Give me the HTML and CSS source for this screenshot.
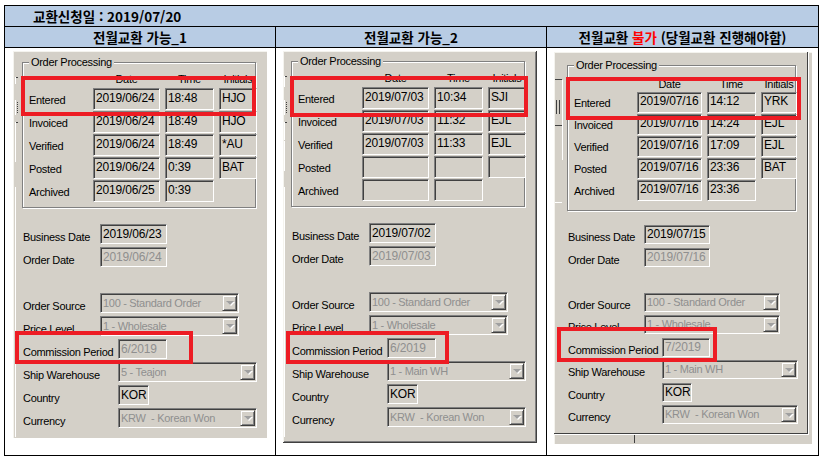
FILE: index.html
```html
<!DOCTYPE html>
<html lang="ko">
<head>
<meta charset="utf-8">
<title>전월교환</title>
<link rel="stylesheet" href="styles.css">
</head>
<body>
<table class="sheet">
  <colgroup><col class="c-a"><col class="c-b"><col class="c-c"></colgroup>
  <tr class="r-title"><td colspan="3" class="title">교환신청일 : 2019/07/20</td></tr>
  <tr class="r-head">
    <td class="head">전월교환 가능_1</td>
    <td class="head">전월교환 가능_2</td>
    <td class="head">전월교환 <span class="red">불가</span> (당월교환 진행해야함)</td>
  </tr>
  <tr class="r-body">
    <td class="cell cell1">
      <div class="win win1">
        <div class="group">
          <span class="legend">Order Processing</span>
          <div class="ghead"><span></span><span>Date</span><span>Time</span><span>Initials</span></div>
          <div class="gbody">
            <div class="grow"><span class="glbl">Entered</span><span class="fld">2019/06/24</span><span class="fld">18:48</span><span class="fld">HJO</span></div>
            <div class="grow"><span class="glbl">Invoiced</span><span class="fld">2019/06/24</span><span class="fld">18:49</span><span class="fld">HJO</span></div>
            <div class="grow"><span class="glbl">Verified</span><span class="fld">2019/06/24</span><span class="fld">18:49</span><span class="fld">*AU</span></div>
            <div class="grow"><span class="glbl">Posted</span><span class="fld">2019/06/24</span><span class="fld">0:39</span><span class="fld">BAT</span></div>
            <div class="grow"><span class="glbl">Archived</span><span class="fld">2019/06/25</span><span class="fld">0:39</span></div>
          </div>
        </div>
        <div class="form">
          <div class="frow"><span class="lbl">Business Date</span><span class="fld w-date">2019/06/23</span></div>
          <div class="frow"><span class="lbl">Order Date</span><span class="fld w-date dis">2019/06/24</span></div>
          <div class="frow"></div>
          <div class="frow"><span class="lbl">Order Source</span><span class="fld dd w-dd dis"><span class="t">100 - Standard Order</span><span class="b"></span></span></div>
          <div class="frow"><span class="lbl">Price Level</span><span class="fld dd w-dd dis"><span class="t">1 - Wholesale</span><span class="b"></span></span></div>
          <div class="frow"><span class="lbl l2">Commission Period</span><span class="fld w-cp dis">6/2019</span></div>
          <div class="frow"><span class="lbl l2">Ship Warehouse</span><span class="fld dd w-dd dis"><span class="t">5 - Teajon</span><span class="b"></span></span></div>
          <div class="frow"><span class="lbl l2">Country</span><span class="fld w-co">KOR</span></div>
          <div class="frow"><span class="lbl l2">Currency</span><span class="fld dd w-dd dis"><span class="t">KRW&nbsp; - Korean Won</span><span class="b"></span></span></div>
        </div>
        <div class="hl hl-e1"></div>
        <div class="hl hl-c1"></div>
      </div>
    </td>
    <td class="cell cell2">
      <div class="win win2">
        <div class="group">
          <span class="legend">Order Processing</span>
          <div class="ghead"><span></span><span>Date</span><span>Time</span><span>Initials</span></div>
          <div class="gbody">
            <div class="grow"><span class="glbl">Entered</span><span class="fld">2019/07/03</span><span class="fld">10:34</span><span class="fld">SJI</span></div>
            <div class="grow"><span class="glbl">Invoiced</span><span class="fld">2019/07/03</span><span class="fld">11:32</span><span class="fld">EJL</span></div>
            <div class="grow"><span class="glbl">Verified</span><span class="fld">2019/07/03</span><span class="fld">11:33</span><span class="fld">EJL</span></div>
            <div class="grow"><span class="glbl">Posted</span><span class="fld"></span><span class="fld"></span><span class="fld"></span></div>
            <div class="grow"><span class="glbl">Archived</span><span class="fld"></span><span class="fld"></span></div>
          </div>
        </div>
        <div class="form">
          <div class="frow"><span class="lbl">Business Date</span><span class="fld w-date">2019/07/02</span></div>
          <div class="frow"><span class="lbl">Order Date</span><span class="fld w-date dis">2019/07/03</span></div>
          <div class="frow"></div>
          <div class="frow"><span class="lbl">Order Source</span><span class="fld dd w-dd dis"><span class="t">100 - Standard Order</span><span class="b"></span></span></div>
          <div class="frow"><span class="lbl">Price Level</span><span class="fld dd w-dd dis"><span class="t">1 - Wholesale</span><span class="b"></span></span></div>
          <div class="frow"><span class="lbl l2">Commission Period</span><span class="fld w-cp dis">6/2019</span></div>
          <div class="frow"><span class="lbl l2">Ship Warehouse</span><span class="fld dd w-dd dis"><span class="t">1 - Main WH</span><span class="b"></span></span></div>
          <div class="frow"><span class="lbl l2">Country</span><span class="fld w-co">KOR</span></div>
          <div class="frow"><span class="lbl l2">Currency</span><span class="fld dd w-dd dis"><span class="t">KRW&nbsp; - Korean Won</span><span class="b"></span></span></div>
        </div>
        <div class="hl hl-e2"></div>
        <div class="hl hl-c2"></div>
      </div>
    </td>
    <td class="cell cell3">
      <div class="win win3">
        <div class="frame">
          <div class="group">
            <span class="legend">Order Processing</span>
            <div class="ghead"><span></span><span>Date</span><span>Time</span><span>Initials</span></div>
            <div class="gbody">
              <div class="grow"><span class="glbl">Entered</span><span class="fld">2019/07/16</span><span class="fld">14:12</span><span class="fld">YRK</span></div>
              <div class="grow"><span class="glbl">Invoiced</span><span class="fld">2019/07/16</span><span class="fld">14:24</span><span class="fld">EJL</span></div>
              <div class="grow"><span class="glbl">Verified</span><span class="fld">2019/07/16</span><span class="fld">17:09</span><span class="fld">EJL</span></div>
              <div class="grow"><span class="glbl">Posted</span><span class="fld">2019/07/16</span><span class="fld">23:36</span><span class="fld">BAT</span></div>
              <div class="grow"><span class="glbl">Archived</span><span class="fld">2019/07/16</span><span class="fld">23:36</span></div>
            </div>
          </div>
          <div class="form">
            <div class="frow"><span class="lbl">Business Date</span><span class="fld w-date">2019/07/15</span></div>
            <div class="frow"><span class="lbl">Order Date</span><span class="fld w-date dis">2019/07/16</span></div>
            <div class="frow"></div>
            <div class="frow"><span class="lbl">Order Source</span><span class="fld dd w-dd dis"><span class="t">100 - Standard Order</span><span class="b"></span></span></div>
            <div class="frow"><span class="lbl">Price Level</span><span class="fld dd w-dd dis"><span class="t">1 - Wholesale</span><span class="b"></span></span></div>
            <div class="frow"><span class="lbl l2">Commission Period</span><span class="fld w-cp dis">7/2019</span></div>
            <div class="frow"><span class="lbl l2">Ship Warehouse</span><span class="fld dd w-dd dis"><span class="t">1 - Main WH</span><span class="b"></span></span></div>
            <div class="frow"><span class="lbl l2">Country</span><span class="fld w-co">KOR</span></div>
            <div class="frow"><span class="lbl l2">Currency</span><span class="fld dd w-dd dis"><span class="t">KRW&nbsp; - Korean Won</span><span class="b"></span></span></div>
          </div>
        </div>
        <div class="hl hl-e3"></div>
        <div class="hl hl-c3"></div>
      </div>
    </td>
  </tr>
</table>
</body>
</html>
```

FILE: styles.css
```css
* { box-sizing: border-box; }

body {
  margin: 0;
  background: #fff;
  font-family: "Liberation Sans", Arial, sans-serif;
  color: #000;
}

.sheet {
  border-collapse: collapse;
  table-layout: fixed;
  margin: 5px 0 0 4px;
  width: 815px;
}
.c-a { width: 271px; }
.c-b { width: 271px; }
.c-c { width: 272px; }

.sheet td {
  border: 1px solid #000;
  padding: 0;
}

.r-title td, .r-head td { height: 21px; }
.r-body td { height: 408px; }

.sheet .title {
  background: #b8cce4;
  font: bold 13.5px/19px "Noto Sans CJK KR", sans-serif;
  padding-left: 28px;
  text-align: left;
}

.sheet .head {
  background: #b8cce4;
  font: bold 13.5px/19px "Noto Sans CJK KR", sans-serif;
  text-align: center;
}
.red { color: #ff0000; }

.sheet .cell { vertical-align: top; background: #fff; }
.sheet .cell1 { padding: 3px 0 0 8px; }
.sheet .cell2 { padding: 3px 0 0 7px; }
.sheet .cell3 { padding: 4px 0 0 7px; }

/* ---------- Windows form panel ---------- */
.win {
  position: relative;
  background-color: #d4d0c8;
  font-family: "Liberation Sans", Arial, sans-serif;
  font-size: 11px;
  letter-spacing: -0.3px;
  --gw: 234px;
  --lc: 59px; --c1: 67px; --c2: 49px; --c3: 38px;
  --gpt: 10px; --gpb: 7px; --hh: 13px;
  --rh: 20px; --rg: 3px;
  --fmt: 16px; --fg: 3px;
  --l1: 77px; --l2: 95px;
  --wd: 67px; --wdd: 139px; --wcp: 49px; --wco: 31px;
}

.win1 {
  width: 254px;
  padding: 11px 0 10px 9px;
  box-shadow: inset 1px 1px 0 #f4f3ee;
  background-image:
    linear-gradient(#fff, #fff), linear-gradient(#404040, #404040),
    linear-gradient(#fff, #fff), repeating-linear-gradient(#404040 0 1px, transparent 1px 2px),
    linear-gradient(#fff, #fff), linear-gradient(#404040, #404040),
    linear-gradient(#fff, #fff), linear-gradient(#fff, #fff);
  background-size: 1px 7px, 3px 1px, 1px 15px, 1px 12px, 1px 7px, 3px 1px, 1px 34px, 1px 250px;
  background-position: 2px 26px, 2px 26px, 2px 49px, 4px 51px, 2px 71px, 2px 71px, 2px 77px, 2px 136px;
  background-repeat: no-repeat;
}

.win2 {
  width: 254px;
  padding: 10px 0 15px 8px;
  border-right: 1px solid #404040;
  border-bottom: 1px solid #404040;
  box-shadow: inset 1px 1px 0 #f4f3ee, inset -1px -1px 0 #808080;
  background-image:
    linear-gradient(#fff, #fff), linear-gradient(#404040, #404040),
    linear-gradient(#fff, #fff), repeating-linear-gradient(#404040 0 1px, transparent 1px 2px),
    linear-gradient(#fff, #fff), linear-gradient(#404040, #404040),
    linear-gradient(#fff, #fff), linear-gradient(#fff, #fff);
  background-size: 1px 11px, 3px 1px, 1px 15px, 1px 12px, 1px 18px, 3px 1px, 1px 30px, 1px 250px;
  background-position: 1px 25px, 1px 25px, 1px 49px, 3px 51px, 1px 71px, 1px 71px, 1px 90px, 1px 136px;
  background-repeat: no-repeat;
}

.win3 {
  width: 258px;
  padding: 0 4px 10px 0;
  --gw: 229px;
  --lc: 58px; --c1: 65px; --c2: 49px; --c3: 36px;
  --gpt: 12px; --gpb: 11px; --hh: 12px;
  --rh: 19px; --rg: 3px;
  --fmt: 14px; --fg: 3.5px;
  --l1: 76px; --l2: 94px;
  --wd: 66px; --wdd: 136px; --wcp: 48px; --wco: 30px;
  box-shadow: inset 1px 1px 0 #f4f3ee;
  background-image:
    linear-gradient(#404040, #404040), linear-gradient(#fff, #fff),
    linear-gradient(#404040, #404040), linear-gradient(#404040, #404040),
    linear-gradient(#404040, #404040), linear-gradient(#fff, #fff),
    linear-gradient(#fff, #fff), linear-gradient(#404040, #404040);
  background-size: 8px 1px, 1px 80px, 1px 14px, 1px 14px, 8px 1px, 8px 1px, 57px 1px, 1px 10px;
  background-position: 0 27px, 8px 28px, 2px 48px, 5px 48px, 0 73px, 0 150px, 23px 381px, 80px 381px;
  background-repeat: no-repeat;
}

.frame {
  border-right: 1px solid #404040;
  border-bottom: 1px solid #404040;
  box-shadow: 1px 1px 0 #fff;
  padding: 13px 0 9px 13px;
}

/* group box */
.group {
  position: relative;
  width: var(--gw);
  border: 1px solid #808080;
  box-shadow: 1px 1px 0 #fff, inset 1px 1px 0 #fff;
  padding: var(--gpt) 3px var(--gpb) 6px;
}
.legend {
  position: absolute;
  top: -7px;
  left: 6px;
  padding: 0 2px;
  line-height: 13px;
  background: #d4d0c8;
  white-space: nowrap;
}

.ghead, .grow {
  display: grid;
  grid-template-columns: var(--lc) var(--c1) var(--c2) var(--c3);
  column-gap: 5px;
}
.ghead {
  height: var(--hh);
  line-height: var(--hh);
  margin-bottom: 2px;
  text-align: center;
  white-space: nowrap;
}
.gbody {
  display: flex;
  flex-direction: column;
  gap: var(--rg);
}
.grow { height: var(--rh); }
.glbl {
  line-height: var(--rh);
  padding-top: 2px;
  white-space: nowrap;
}

/* lower form */
.form {
  margin-top: var(--fmt);
  padding-left: 1px;
  display: flex;
  flex-direction: column;
  gap: var(--fg);
}
.frow {
  display: flex;
  height: var(--rh);
}
.lbl {
  flex: none;
  width: var(--l1);
  line-height: var(--rh);
  padding-top: 3px;
  white-space: nowrap;
}
.lbl.l2 { width: var(--l2); }

/* fields */
.fld {
  display: block;
  height: 100%;
  background: #d4d0c8;
  border: 1px solid;
  border-color: #808080 #fff #fff #808080;
  box-shadow: inset 1px 1px 0 #404040;
  padding-left: 2px;
  font-size: 12px;
  letter-spacing: -0.15px;
  line-height: calc(var(--rh) - 2px);
  white-space: nowrap;
  overflow: hidden;
}
.w-date { width: var(--wd); }
.w-dd { width: var(--wdd); }
.w-cp { width: var(--wcp); }
.w-co { width: var(--wco); }
.dis { color: #8f8f8f; }

.dd {
  display: flex;
  align-items: center;
}
.dd .t {
  flex: 1;
  overflow: hidden;
  font-size: 11px;
  letter-spacing: -0.3px;
}
.dd .b {
  flex: none;
  width: 15px;
  height: calc(100% - 2px);
  margin-right: 1px;
  background: #d4d0c8;
  border: 1px solid;
  border-color: #d4d0c8 #404040 #404040 #d4d0c8;
  box-shadow: inset 1px 1px 0 #fff, inset -1px -1px 0 #808080;
  display: flex;
  align-items: center;
  justify-content: center;
}
.dd .b::after {
  content: "";
  width: 0;
  height: 0;
  border-left: 4px solid transparent;
  border-right: 4px solid transparent;
  border-top: 4px solid #a0a0a0;
  filter: drop-shadow(1px 1px 0 #fff);
}

/* red highlight boxes */
.hl {
  position: absolute;
  border: 4px solid #ed1c24;
}
.hl-e1 { left: 8px; top: 25px; width: 235px; height: 40px; }
.hl-c1 { left: 2px; top: 280px; width: 178px; height: 33px; }
.hl-e2 { left: 7px; top: 25px; width: 238px; height: 41px; }
.hl-c2 { left: 3px; top: 280px; width: 163px; height: 33px; }
.hl-e3 { left: 12px; top: 25px; width: 235px; height: 43px; }
.hl-c3 { left: 3px; top: 275px; width: 160px; height: 35px; }
```
